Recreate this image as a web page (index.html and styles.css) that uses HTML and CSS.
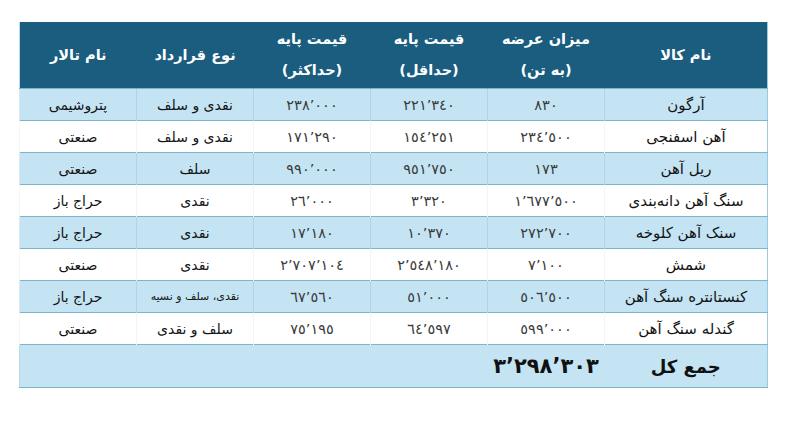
FILE: index.html
```html
<!DOCTYPE html>
<html lang="fa" dir="rtl">
<head>
<meta charset="utf-8">
<title>جدول عرضه</title>
<link rel="stylesheet" href="styles.css">
</head>
<body>
<div class="page">
<table class="grid">
  <colgroup>
    <col class="c-name"><col class="c-std"><col class="c-std"><col class="c-std"><col class="c-std"><col class="c-std">
  </colgroup>
  <thead>
    <tr>
      <th>نام کالا</th>
      <th>میزان عرضه<br>(به تن)</th>
      <th>قیمت پایه<br>(حداقل)</th>
      <th>قیمت پایه<br>(حداکثر)</th>
      <th>نوع قرارداد</th>
      <th>نام تالار</th>
    </tr>
  </thead>
  <tbody>
    <tr class="alt">
      <td class="name">آرگون</td>
      <td><span class="num">٨٣٠</span></td>
      <td><span class="num">٢٢١’٣٤٠</span></td>
      <td><span class="num">٢٣٨’٠٠٠</span></td>
      <td>نقدی و سلف</td>
      <td>پتروشیمی</td>
    </tr>
    <tr>
      <td class="name">آهن اسفنجی</td>
      <td><span class="num">٢٣٤’٥٠٠</span></td>
      <td><span class="num">١٥٤’٢٥١</span></td>
      <td><span class="num">١٧١’٢٩٠</span></td>
      <td>نقدی و سلف</td>
      <td>صنعتی</td>
    </tr>
    <tr class="alt">
      <td class="name">ریل آهن</td>
      <td><span class="num">١٧٣</span></td>
      <td><span class="num">٩٥١’٧٥٠</span></td>
      <td><span class="num">٩٩٠’٠٠٠</span></td>
      <td>سلف</td>
      <td>صنعتی</td>
    </tr>
    <tr>
      <td class="name">سنگ آهن دانه‌بندی</td>
      <td><span class="num">١’٦٧٧’٥٠٠</span></td>
      <td><span class="num">٣’٣٢٠</span></td>
      <td><span class="num">٢٦’٠٠٠</span></td>
      <td>نقدی</td>
      <td>حراج باز</td>
    </tr>
    <tr class="alt">
      <td class="name">سنک آهن کلوخه</td>
      <td><span class="num">٢٧٢’٧٠٠</span></td>
      <td><span class="num">١٠’٣٧٠</span></td>
      <td><span class="num">١٧’١٨٠</span></td>
      <td>نقدی</td>
      <td>حراج باز</td>
    </tr>
    <tr>
      <td class="name">شمش</td>
      <td><span class="num">٧’١٠٠</span></td>
      <td><span class="num">٢’٥٤٨’١٨٠</span></td>
      <td><span class="num">٢’٧٠٧’١٠٤</span></td>
      <td>نقدی</td>
      <td>صنعتی</td>
    </tr>
    <tr class="alt">
      <td class="name">کنستانتره سنگ آهن</td>
      <td><span class="num">٥٠٦’٥٠٠</span></td>
      <td><span class="num">٥١’٠٠٠</span></td>
      <td><span class="num">٦٧’٥٦٠</span></td>
      <td class="small">نقدی، سلف و نسیه</td>
      <td>حراج باز</td>
    </tr>
    <tr>
      <td class="name">گندله سنگ آهن</td>
      <td><span class="num">٥٩٩’٠٠٠</span></td>
      <td><span class="num">٦٤’٥٩٧</span></td>
      <td><span class="num">٧٥’١٩٥</span></td>
      <td>سلف و نقدی</td>
      <td>صنعتی</td>
    </tr>
  </tbody>
  <tfoot>
    <tr>
      <td class="total-label">جمع کل</td>
      <td class="total-value"><span class="num">٣’٢٩٨’٣٠٣</span></td>
      <td colspan="4"></td>
    </tr>
  </tfoot>
</table>
</div>
</body>
</html>
```

FILE: styles.css
```css
html, body {
  margin: 0;
  padding: 0;
  background: #ffffff;
}

.page {
  padding: 22px 26px 0 19px;
  direction: ltr;
}

.grid {
  direction: rtl;
  width: 748px;
  border-collapse: collapse;
  table-layout: fixed;
  font-family: "DejaVu Sans", "Noto Sans", sans-serif;
  color: #141414;
  border-right: 1px solid #9ccbe0;
  border-left: 1px solid #b9dcec;
}

.c-name { width: 163px; }
.c-std { width: 117px; }

.grid th {
  background: #1b5d7f;
  color: #ffffff;
  font-weight: bold;
  font-size: 14.5px;
  line-height: 31px;
  height: 66px;
  padding: 0;
  text-align: center;
  vertical-align: middle;
}

.grid td {
  height: 31px;
  padding: 0;
  text-align: center;
  vertical-align: middle;
  font-size: 14px;
  border-top: 1px solid #7db6cc;
  border-left: 1px solid rgba(120, 160, 180, 0.1);
}

.grid tbody tr td {
  background: #ffffff;
}

.grid tbody tr.alt td {
  background: #c4e4f4;
  border-left-color: rgba(110, 160, 190, 0.25);
}

.grid td.name {
  font-size: 15px;
}

.grid td.small {
  font-size: 11px;
}

.num {
  direction: ltr;
  unicode-bidi: bidi-override;
  color: #3a3a3a;
  font-size: 14.5px;
  letter-spacing: 0.6px;
}

.grid tfoot td {
  background: #c4e4f4;
  height: 42px;
  border-top: 1px solid #7db6cc;
  border-bottom: 1px solid #7db6cc;
  border-left: none;
}

.grid td.total-label {
  font-size: 18px;
  font-weight: bold;
  color: #111111;
}

.grid td.total-value .num {
  font-size: 21px;
  font-weight: bold;
  color: #111111;
  letter-spacing: 0;
}
```
